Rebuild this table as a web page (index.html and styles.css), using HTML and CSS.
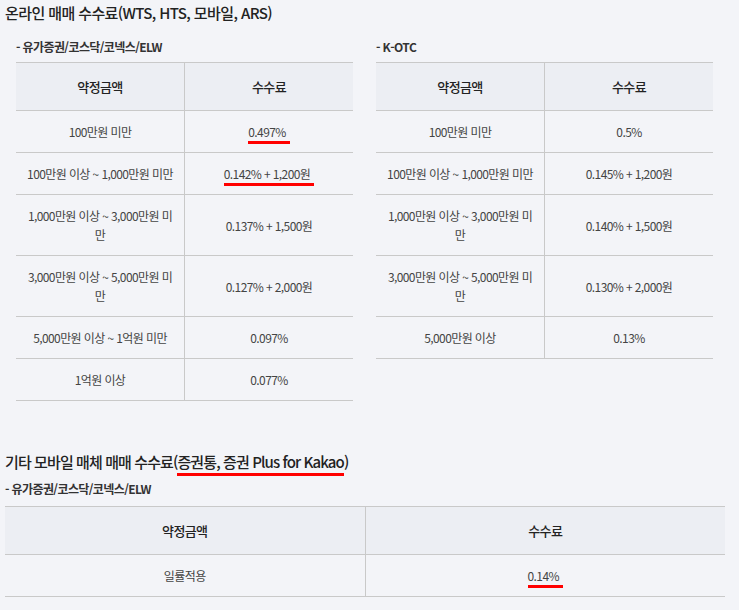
FILE: index.html
```html
<!DOCTYPE html>
<html lang="ko">
<head>
<meta charset="utf-8">
<title>수수료</title>
<link rel="stylesheet" href="styles.css">
</head>
<body>
<div class="page">
  <h2 class="title">온라인 매매 수수료(WTS, HTS, 모바일, ARS)</h2>
  <div class="pair">
    <div class="col">
      <h3 class="sub">- 유가증권/코스닥/코넥스/ELW</h3>
      <table class="fee">
        <thead><tr><th>약정금액</th><th>수수료</th></tr></thead>
        <tbody>
          <tr><td>100만원 미만</td><td><span class="mark">0.497%</span></td></tr>
          <tr><td>100만원 이상 ~ 1,000만원 미만</td><td><span class="mark">0.142% + 1,200원</span></td></tr>
          <tr><td>1,000만원 이상 ~ 3,000만원 미만</td><td>0.137% + 1,500원</td></tr>
          <tr><td>3,000만원 이상 ~ 5,000만원 미만</td><td>0.127% + 2,000원</td></tr>
          <tr><td>5,000만원 이상 ~ 1억원 미만</td><td>0.097%</td></tr>
          <tr><td>1억원 이상</td><td>0.077%</td></tr>
        </tbody>
      </table>
    </div>
    <div class="col">
      <h3 class="sub">- K-OTC</h3>
      <table class="fee">
        <thead><tr><th>약정금액</th><th>수수료</th></tr></thead>
        <tbody>
          <tr><td>100만원 미만</td><td>0.5%</td></tr>
          <tr><td>100만원 이상 ~ 1,000만원 미만</td><td>0.145% + 1,200원</td></tr>
          <tr><td>1,000만원 이상 ~ 3,000만원 미만</td><td>0.140% + 1,500원</td></tr>
          <tr><td>3,000만원 이상 ~ 5,000만원 미만</td><td>0.130% + 2,000원</td></tr>
          <tr><td>5,000만원 이상</td><td>0.13%</td></tr>
        </tbody>
      </table>
    </div>
  </div>

  <h2 class="title title2">기타 모바일 매체 매매 수수료(<span class="mark-t">증권통, 증권 Plus for Kakao</span>)</h2>
  <h3 class="sub sub2">- 유가증권/코스닥/코넥스/ELW</h3>
  <table class="fee wide">
    <thead><tr><th>약정금액</th><th>수수료</th></tr></thead>
    <tbody>
      <tr><td>일률적용</td><td><span class="mark">0.14%</span></td></tr>
    </tbody>
  </table>
</div>
</body>
</html>
```

FILE: styles.css
```css
html, body {
  margin: 0;
  padding: 0;
  background: #f3f4f8;
}
body {
  font-family: "Noto Sans CJK KR", "Noto Sans", sans-serif;
  color: #444;
}
.page {
  padding: 0 0 0 5px;
  width: 720px;
}
.title {
  margin: 0;
  padding-top: 1px;
  font-size: 15px;
  line-height: 24px;
  font-weight: 500;
  color: #222;
  letter-spacing: -0.6px;
}
.pair {
  display: flex;
  gap: 23px;
  padding-left: 11px;
}
.col {
  width: 337px;
}
.sub {
  margin: 12px 0 0;
  font-size: 12px;
  line-height: 20px;
  font-weight: 700;
  color: #333;
  letter-spacing: -0.6px;
}
.fee {
  margin-top: 5px;
  width: 337px;
  border-collapse: collapse;
  table-layout: fixed;
  font-size: 12px;
  letter-spacing: -0.6px;
}
.fee th, .fee td {
  border: 1px solid #c9c9c9;
  border-left: 0;
  border-right: 0;
  text-align: center;
  vertical-align: middle;
}
.fee th + th, .fee td + td {
  border-left: 1px solid #c9c9c9;
}
.fee th {
  background: #eceef3;
  color: #222;
  font-size: 13px;
  font-weight: 500;
  line-height: 19px;
  padding: 14px 10px;
}
.fee td {
  color: #444;
  line-height: 19px;
  padding: 11px 10px;
}
.mark {
  padding: 0 4px 1px 0;
  border-bottom: 3px solid #ff0000;
}
.mark-t {
  padding-bottom: 1px;
  border-bottom: 3px solid #ff0000;
}
.title2 {
  margin-top: 48px;
  letter-spacing: -0.9px;
}
.sub2 {
  margin-top: 5px;
}
.wide {
  width: 720px;
  margin-top: 7px;
}
```
